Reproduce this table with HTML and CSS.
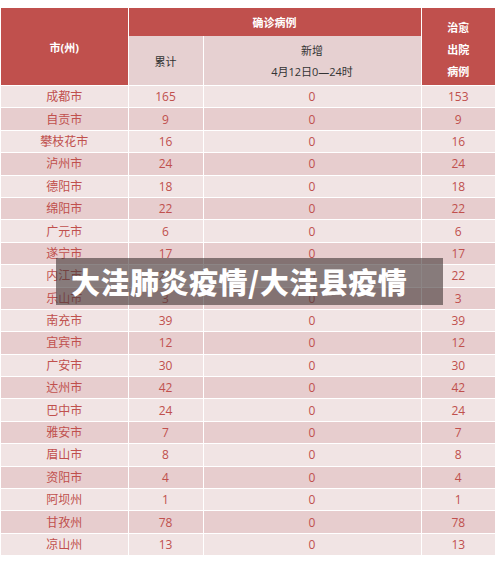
FILE: index.html
```html
<!DOCTYPE html>
<html lang="zh">
<head>
    <meta charset="UTF-8">
    <title>大洼肺炎疫情/大洼县疫情</title>
    <link rel="stylesheet" href="styles.css">
</head>
<body>
<div class="page">
    <table class="stats">
        <colgroup>
            <col class="c-city">
            <col class="c-total">
            <col class="c-new">
            <col class="c-cured">
        </colgroup>
        <thead>
        <tr>
            <th class="city-head" rowspan="2">市(州)</th>
            <th class="group-head" colspan="2">确诊病例</th>
            <th class="cured-head" rowspan="2">治愈<br>出院<br>病例</th>
        </tr>
        <tr class="sub">
            <th>累计</th>
            <th class="new-head">新增<br>4月12日0—24时</th>
        </tr>
        </thead>
        <tbody>
        <tr><td>成都市</td><td>165</td><td>0</td><td>153</td></tr>
        <tr><td>自贡市</td><td>9</td><td>0</td><td>9</td></tr>
        <tr><td>攀枝花市</td><td>16</td><td>0</td><td>16</td></tr>
        <tr><td>泸州市</td><td>24</td><td>0</td><td>24</td></tr>
        <tr><td>德阳市</td><td>18</td><td>0</td><td>18</td></tr>
        <tr><td>绵阳市</td><td>22</td><td>0</td><td>22</td></tr>
        <tr><td>广元市</td><td>6</td><td>0</td><td>6</td></tr>
        <tr><td>遂宁市</td><td>17</td><td>0</td><td>17</td></tr>
        <tr><td>内江市</td><td>22</td><td>0</td><td>22</td></tr>
        <tr><td>乐山市</td><td>3</td><td>0</td><td>3</td></tr>
        <tr><td>南充市</td><td>39</td><td>0</td><td>39</td></tr>
        <tr><td>宜宾市</td><td>12</td><td>0</td><td>12</td></tr>
        <tr><td>广安市</td><td>30</td><td>0</td><td>30</td></tr>
        <tr><td>达州市</td><td>42</td><td>0</td><td>42</td></tr>
        <tr><td>巴中市</td><td>24</td><td>0</td><td>24</td></tr>
        <tr><td>雅安市</td><td>7</td><td>0</td><td>7</td></tr>
        <tr><td>眉山市</td><td>8</td><td>0</td><td>8</td></tr>
        <tr><td>资阳市</td><td>4</td><td>0</td><td>4</td></tr>
        <tr><td>阿坝州</td><td>1</td><td>0</td><td>1</td></tr>
        <tr><td>甘孜州</td><td>78</td><td>0</td><td>78</td></tr>
        <tr><td>凉山州</td><td>13</td><td>0</td><td>13</td></tr>
        </tbody>
    </table>
    <div class="banner">大洼肺炎疫情/大洼县疫情</div>
</div>
</body>
</html>
```

FILE: styles.css
```css
html, body {
    margin: 0;
    background: #ffffff;
    font-family: "Open Sans", "Noto Sans CJK SC", sans-serif;
}
.page {
    position: relative;
    width: 500px;
    height: 564px;
    padding: 8px 5px 0 1px;
    box-sizing: border-box;
}
.stats {
    width: 494px;
    border-collapse: collapse;
    table-layout: fixed;
    font-size: 12px;
}
.c-city { width: 127px; }
.c-total { width: 75px; }
.c-new { width: 218px; }
.c-cured { width: 74px; }
.stats th,
.stats td {
    text-align: center;
    padding: 0;
    border: 1px solid #ffffff;
    border-top: none;
    border-bottom: none;
}
.stats thead th {
    background: #c0504d;
    color: #ffffff;
    font-weight: bold;
    font-size: 11px;
}
.city-head {
    height: 77px;
    border-left: none !important;
}
.group-head {
    height: 28px;
    vertical-align: middle;
}
.cured-head {
    line-height: 22px;
    padding-top: 6px !important;
    border-right: none !important;
}
.stats .sub th {
    background: #e6d0d1;
    color: #333333;
    font-weight: normal;
    height: 49px;
}
.new-head {
    line-height: 21px;
}
.stats tbody td {
    height: 21.4px;
    line-height: 21px;
    color: #c0504d;
    border-top: 1px solid #ffffff;
    background: #f1e4e4;
}
.stats tbody tr:nth-child(even) td {
    background: #e7cdce;
}
.stats tbody td:first-child {
    border-left: none;
}
.stats tbody td:last-child {
    border-right: none;
}
.banner {
    position: absolute;
    left: 56px;
    top: 258px;
    width: 387px;
    height: 47px;
    line-height: 47px;
    background: rgba(70, 58, 58, 0.62);
    color: #ffffff;
    font-size: 29px;
    font-weight: 900;
    padding-left: 15px;
    box-sizing: border-box;
    font-family: "Noto Sans CJK SC", sans-serif;
    letter-spacing: 0.5px;
}
```
